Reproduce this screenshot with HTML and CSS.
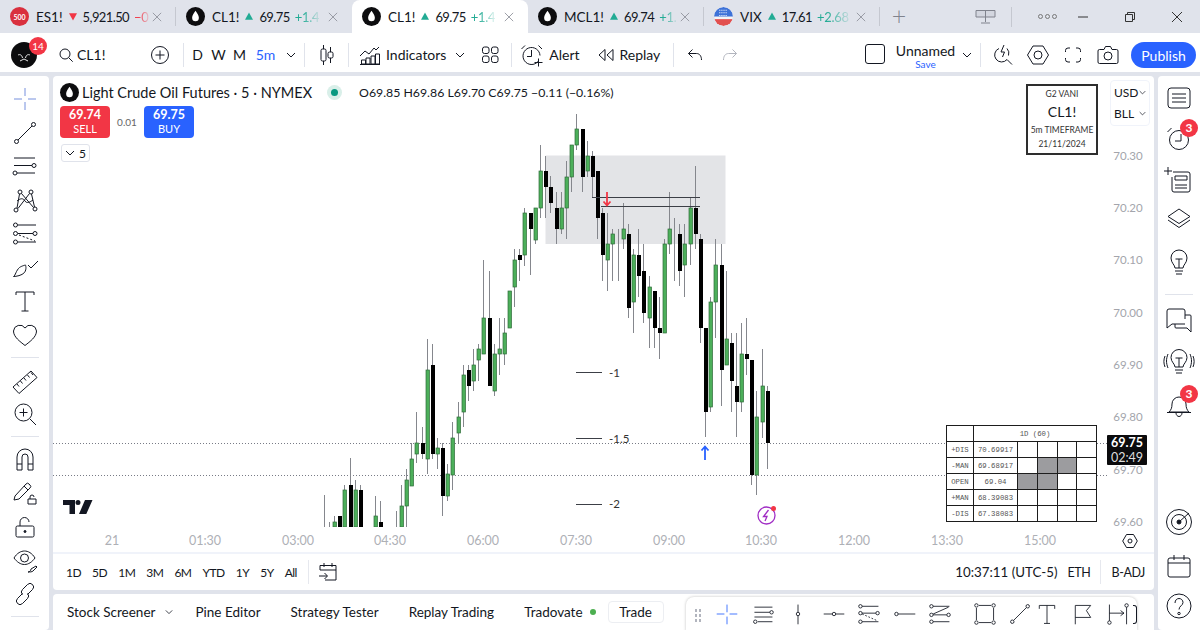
FILE: index.html
```html
<!DOCTYPE html>
<html lang="en">
<head>
    <meta charset="UTF-8">
    <title>CL1! 69.75 - Unnamed</title>
    <link rel="stylesheet" href="styles.css">
</head>
<body>
    <!-- browser style tabs -->
    <div class="tabbar">
        <div class="tab tab-sep">
            <span class="fav fav-red">500</span><span class="sym">ES1!</span>
            <svg class="tri" viewBox="0 0 10 10"><path d="M0 1h10L5 10z" fill="#f23645"/></svg>
            <span class="px">5,921.50</span><span class="chg chg-red">−0</span>
            <svg class="x" viewBox="0 0 12 12"><path d="M1 1l10 10M11 1L1 11"/></svg>
        </div>
        <div class="tab">
            <span class="fav fav-oil"><svg viewBox="0 0 18 18"><path d="M9 3.500C7.500 6 5.800 7.800 5.800 10.200a3.200 3.400 0 0 0 6.400 0C12.200 7.800 10.500 6 9 3.500z" fill="#fff"/></svg></span><span class="sym">CL1!</span>
            <svg class="tri" viewBox="0 0 10 10"><path d="M0 9h10L5 0z" fill="#22ab94"/></svg>
            <span class="px">69.75</span><span class="chg">+1.4</span>
            <svg class="x" viewBox="0 0 12 12"><path d="M1 1l10 10M11 1L1 11"/></svg>
        </div>
        <div class="tab tab-on">
            <span class="fav fav-oil"><svg viewBox="0 0 18 18"><path d="M9 3.500C7.500 6 5.800 7.800 5.800 10.200a3.200 3.400 0 0 0 6.400 0C12.200 7.800 10.500 6 9 3.500z" fill="#fff"/></svg></span><span class="sym">CL1!</span>
            <svg class="tri" viewBox="0 0 10 10"><path d="M0 9h10L5 0z" fill="#22ab94"/></svg>
            <span class="px">69.75</span><span class="chg">+1.4</span>
            <svg class="x" viewBox="0 0 12 12"><path d="M1 1l10 10M11 1L1 11"/></svg>
        </div>
        <div class="tab tab-sep">
            <span class="fav fav-oil"><svg viewBox="0 0 18 18"><path d="M9 3.500C7.500 6 5.800 7.800 5.800 10.200a3.200 3.400 0 0 0 6.400 0C12.200 7.800 10.500 6 9 3.500z" fill="#fff"/></svg></span><span class="sym">MCL1!</span>
            <svg class="tri" viewBox="0 0 10 10"><path d="M0 9h10L5 0z" fill="#22ab94"/></svg>
            <span class="px">69.74</span><span class="chg">+1.</span>
            <svg class="x" viewBox="0 0 12 12"><path d="M1 1l10 10M11 1L1 11"/></svg>
        </div>
        <div class="tab tab-sep">
            <span class="fav fav-flag"><svg viewBox="0 0 18 18"><clipPath id="flag"><circle cx="9" cy="9" r="9"/></clipPath><g clip-path="url(#flag)"><rect width="18" height="18" fill="#f4f4f6"/><rect width="18" height="9" fill="#3d72d8"/><rect y="11.500" width="18" height="6.500" fill="#e2504f"/><path d="M5 3h8M5 5.500h8M5 8h8" stroke="#fff" stroke-dasharray="1 1"/></g></svg></span><span class="sym">VIX</span>
            <svg class="tri" viewBox="0 0 10 10"><path d="M0 9h10L5 0z" fill="#22ab94"/></svg>
            <span class="px">17.61</span><span class="chg">+2.68</span>
            <svg class="x" viewBox="0 0 12 12"><path d="M1 1l10 10M11 1L1 11"/></svg>
        </div>
        <span class="tab-add">+</span>
        <div class="win">
            <svg class="win-layout" viewBox="0 0 24 16"><path d="M3 1.500h19v6.500H3zM12.500 1.500V13M8 14h9" fill="#d3d6df" stroke="#80838d"/></svg>
            <span class="win-sep"></span>
            <span class="win-dots"><i></i><i></i><i></i></span>
            <svg class="win-min" viewBox="0 0 12 2"><path d="M1 1h10" stroke="#333"/></svg>
            <svg class="win-max" viewBox="0 0 12 12"><path d="M1.500 3.500h7v7h-7zM3.500 3.500v-2h7v7h-2" fill="none" stroke="#333"/></svg>
            <svg class="win-close" viewBox="0 0 12 12"><path d="M1 1l10 10M11 1L1 11" stroke="#333"/></svg>
        </div>
    </div>

    <!-- top toolbar -->
    <div class="toolbar">
        <div class="logo">
            <svg class="logo-mark" viewBox="0 0 26 26"><circle cx="13" cy="13" r="13" fill="#0c0c0e"/><path d="M7 13c2-1 4 0 4.500 3M19 13c-2-1-4 0-4.500 3M9 19l4-2 4 2" stroke="#e8e8e8"/></svg>
            <span class="badge badge-logo">14</span>
        </div>
        <div class="search">
            <svg class="ic16" viewBox="0 0 16 16"><circle cx="7" cy="7" r="5" /><path d="M10.700 10.700l4 4"/></svg>
            <span>CL1!</span>
        </div>
        <div class="tb w30"><svg class="ic20" viewBox="0 0 20 20"><circle cx="10" cy="10" r="8.500"/><path d="M10 5.500v9M5.500 10h9"/></svg></div>
        <span class="tb-sep sep-a"></span>
        <div class="intervals">
            <span class="tb w21">D</span><span class="tb w21">W</span><span class="tb w21">M</span><span class="tb w31 blue">5m</span>
            <div class="tb w20"><svg class="chev" viewBox="0 0 10 6"><path d="M1 1l4 4 4-4"/></svg></div>
        </div>
        <span class="tb-sep sep-e"></span>
        <div class="tb w43"><svg class="ic24" viewBox="0 0 24 24"><path d="M8.500 2v4M8.500 18v4M15.500 4v5M15.500 15v5"/><rect x="6" y="6" width="5" height="12" rx="1.500"/><rect x="13" y="9" width="5" height="6" rx="1.500"/></svg></div>
        <span class="tb-sep"></span>
        <div class="tb indicators">
            <svg class="ic24" viewBox="0 0 24 24"><path d="M2 13l5-5 4 3 5-6 2 2 3-3M3.500 21v-4h4v4zM8 21v-6h4v6zM13 21v-8h4v8zM17.500 21v-10h4v10zM2 21.500h20"/></svg>
            <span>Indicators</span>
        </div>
        <div class="tb w28"><svg class="chev" viewBox="0 0 10 6"><path d="M1 1l4 4 4-4"/></svg></div>
        <div class="tb w32"><svg class="ic20" viewBox="0 0 20 20"><rect x="2.500" y="2" width="6.500" height="6.500" rx="2"/><rect x="11.500" y="2" width="6.500" height="6.500" rx="2"/><rect x="2.500" y="11" width="6.500" height="6.500" rx="2"/><rect x="11.500" y="11" width="6.500" height="6.500" rx="2"/></svg></div>
        <span class="tb-sep sep-b"></span>
        <div class="tb alert">
            <svg class="ic24" viewBox="0 0 24 24"><path d="M18 18.500A8.500 8.500 0 1 1 20 12.500M11.500 7v6.500H7M1.500 6l3.500-3.500M22 6l-3.500-3.500M18.500 15.500v8M14.500 19.500h8"/></svg>
            <span>Alert</span>
        </div>
        <div class="tb replay">
            <svg class="ic20" viewBox="0 0 20 20"><path d="M9 4.500l-6 5.500 6 5.500zM17 4.500l-6 5.500 6 5.500z"/></svg>
            <span>Replay</span>
        </div>
        <span class="tb-sep sep-c"></span>
        <div class="tb w35"><svg class="ic20" viewBox="0 0 20 20"><path d="M7.500 4.500l-4 4 4 4M3.500 8.500h8c3 0 5 2.500 5 6.500"/></svg></div>
        <div class="tb w35 off"><svg class="ic20" viewBox="0 0 20 20"><path d="M12.500 4.500l4 4-4 4M16.500 8.500h-8c-3 0-5 2.500-5 6.500"/></svg></div>
        <div class="tb-right">
            <span class="layout-box"></span>
            <div class="layout-name"><span>Unnamed</span><small>Save</small></div>
            <div class="tb w20"><svg class="chev" viewBox="0 0 10 6"><path d="M1 1l4 4 4-4"/></svg></div>
            <span class="tb-sep sep-d"></span>
            <div class="tb w36"><svg class="ic24" viewBox="0 0 24 24"><path d="M9 5.500a7 7 0 1 0 8 11l5 5M14 2l-3 7h3.500l-2 5M17 5.500a7 7 0 0 1 1.500 7"/></svg></div>
            <div class="tb w35"><svg class="ic24" viewBox="0 0 24 24"><path d="M7 3h10l5.500 9-5.500 9H7l-5.500-9z"/><circle cx="12" cy="12" r="4"/></svg></div>
            <div class="tb w35"><svg class="ic20" viewBox="0 0 20 20"><path d="M7 3H5a2.500 2.500 0 0 0-2.500 2.500V7M13 3h2a2.500 2.500 0 0 1 2.500 2.500V7M7 17H5a2.500 2.500 0 0 1-2.500-2.500V13M13 17h2a2.500 2.500 0 0 0 2.500-2.500V13"/></svg></div>
            <div class="tb w36"><svg class="ic24" viewBox="0 0 24 24"><path d="M3.500 6.500h4.500l1.500-3h5l1.500 3h4.500a1.500 1.500 0 0 1 1.500 1.500v11a1.500 1.500 0 0 1-1.500 1.500h-17A1.500 1.500 0 0 1 2 19V8a1.500 1.500 0 0 1 1.500-1.500z"/><circle cx="12" cy="13" r="4"/></svg></div>
            <button class="publish">Publish</button>
        </div>
    </div>

    <div class="main">
        <!-- left drawing tools -->
        <div class="side-left">
            <div class="tool tool-blue"><svg class="ic28" viewBox="0 0 28 28"><path d="M14 3v8M14 17v8M3 14h8M17 14h8"/></svg></div>
            <div class="tool"><svg class="ic28" viewBox="0 0 28 28"><circle cx="5.500" cy="22.500" r="2"/><circle cx="22.500" cy="5.500" r="2"/><path d="M7 21L21 7"/></svg></div>
            <div class="tool"><svg class="ic28" viewBox="0 0 28 28"><path d="M3 6h21M3 13.500h18M6 21h18"/><circle cx="23" cy="13.500" r="2"/><circle cx="4" cy="21" r="2"/></svg></div>
            <div class="tool"><svg class="ic28" viewBox="0 0 28 28"><circle cx="9" cy="6" r="2"/><circle cx="20" cy="6" r="2"/><circle cx="5" cy="24" r="2"/><circle cx="24" cy="23" r="2"/><path d="M8.500 8L6 22M10.500 7.500L22.500 21.500M18.500 7.500L7 22.500M20.500 8L23.500 21M6 15c4-3 6-3 8 0s5 1 8-1"/></svg></div>
            <div class="tool"><svg class="ic28" viewBox="0 0 28 28"><path d="M7 5h18M7 13.500h15M7 22h18"/><circle cx="4.500" cy="5" r="2"/><circle cx="4.500" cy="13.500" r="2"/><circle cx="24" cy="13.500" r="2"/><circle cx="4.500" cy="22" r="2"/><path d="M8 15l16 6" stroke-dasharray="2 2"/></svg></div>
            <div class="tool"><svg class="ic28" viewBox="0 0 28 28"><path d="M2.500 23.500c2-1 2.500-6 6-9 2-1.500 6-2.500 6-2.500s1.500 4-1 7.500c-2.500 3-8.500 4-11 4zM17 12l3 3 7-7"/></svg></div>
            <div class="tool"><svg class="ic28" viewBox="0 0 28 28"><path d="M5 8V5h18v3M14 5v19M10.500 24h7"/></svg></div>
            <div class="tool"><svg class="ic28" viewBox="0 0 28 28"><path d="M14 24.500C9 20.500 2.500 16 2.500 10A6.300 6.300 0 0 1 14 7a6.300 6.300 0 0 1 11.500 3c0 6-6.500 10.500-11.500 14.500z"/></svg></div>
            <span class="side-sep"></span>
            <div class="tool"><svg class="ic28" viewBox="0 0 28 28"><path d="M2 21L20 5l6 6.500L8 27.500zM6 18l2 2.500M9.500 15l2 2.500M13 12l2 2.500M16.500 9l2 2.500M20 6.500l2 2.500" /></svg></div>
            <div class="tool"><svg class="ic28" viewBox="0 0 28 28"><circle cx="12.500" cy="12.500" r="8.500"/><path d="M12.500 8.500v8M8.500 12.500h8M19 19l6 6"/></svg></div>
            <span class="side-sep"></span>
            <div class="tool"><svg class="ic28" viewBox="0 0 28 28"><path d="M6 18V11a8 8 0 0 1 16 0v7M11 18V11a3 3 0 0 1 6 0v7M6 18v6h5v-6zM17 18v6h5v-6z"/></svg></div>
            <div class="tool"><svg class="ic28" viewBox="0 0 28 28"><path d="M3 21l1-4L15 5a2 2 0 0 1 3 0l1 1a2 2 0 0 1 0 3L8 20zM13 7l4 4M17 25v-5h8v5zM19 20v-2a2 2 0 0 1 4 0"/></svg></div>
            <div class="tool"><svg class="ic28" viewBox="0 0 28 28"><path d="M6.500 13h15a1.500 1.500 0 0 1 1.500 1.500v8a1.500 1.500 0 0 1-1.500 1.500h-15A1.500 1.500 0 0 1 5 22.500v-8A1.500 1.500 0 0 1 6.500 13zM9 13V9a4.500 4.500 0 0 1 9 0"/><circle cx="14" cy="18.500" r="1" fill="#131722"/></svg></div>
            <div class="tool"><svg class="ic28" viewBox="0 0 28 28"><path d="M3 11c3-5 7-7 10.500-7S21 6 24 11c-3 4-6.500 6.500-10.500 6.500S6 15 3 11z"/><circle cx="13.500" cy="11" r="4"/><path d="M17 25c1 0 3-1 3-3l5-3 1 1-4 4c-1 1-3 1-5 1z"/></svg></div>
            <div class="tool"><svg class="ic28" viewBox="0 0 28 28"><path d="M11.500 13.500l-5 5a3.500 3.500 0 0 0 5 5l5-5a3.500 3.500 0 0 0 0-5M16.500 14.500l5-5a3.500 3.500 0 0 0-5-5l-5 5a3.500 3.500 0 0 0 0 5"/></svg></div>
            <span class="side-sep"></span>
        </div>

        <div class="center">
            <div class="chart">
                <!-- page coordinates, so bars can be read straight off the screen -->
                <svg id="plot" class="plot" viewBox="53 76 1101 478">
                    <defs><clipPath id="pane"><rect x="53" y="76" width="1056" height="451"/></clipPath></defs>
                    <rect x="545.500" y="155.500" width="180" height="88.500" fill="#e3e4e7"/>
                    <g class="dots">
                        <path d="M53 443.500H1107M53 475.500H1107"/>
                    </g>
                    <g id="bars" clip-path="url(#pane)"></g>
                    <g class="levels">
                        <path d="M592 197.500H700M601 206.500H700"/>
                        <path d="M576 372.500h26M576 438.500h26M576 504.500h26"/>
                    </g>
                    <g class="level-text">
                        <text x="609" y="377">-1</text>
                        <text x="609" y="443">-1.5</text>
                        <text x="609" y="508">-2</text>
                    </g>
                    <path d="M607 192v13M603.500 201.500l3.500 4 3.500-4" class="arrow-down"/>
                    <path d="M705 460v-13M701.500 450.500l3.500-4 3.500 4" class="arrow-up"/>
                    <circle cx="766.500" cy="515.500" r="8.500" class="flash"/>
                    <path d="M768.500 510l-5 6.500h3.500l-2 4.500" class="flash"/>
                    <circle cx="773.500" cy="508.500" r="2.500" fill="#f23645"/>
                    <path d="M63 500h12v14h-5.500v-9H63zM78 505a2.500 2.500 0 1 0 0-5 2.500 2.500 0 0 0 0 5zM85 500h7.500l-6.200 14H79z" fill="#131722"/>
                    <g class="price-labels">
                        <text x="1128" y="160">70.30</text>
                        <text x="1128" y="212">70.20</text>
                        <text x="1128" y="264">70.10</text>
                        <text x="1128" y="317">70.00</text>
                        <text x="1128" y="369">69.90</text>
                        <text x="1128" y="421">69.80</text>
                        <text x="1128" y="474">69.70</text>
                        <text x="1128" y="526">69.60</text>
                    </g>
                    <g class="time-labels">
                        <text x="112" y="545">21</text>
                        <text x="205" y="545">01:30</text>
                        <text x="298" y="545">03:00</text>
                        <text x="390" y="545">04:30</text>
                        <text x="483" y="545">06:00</text>
                        <text x="576" y="545">07:30</text>
                        <text x="669" y="545">09:00</text>
                        <text x="761" y="545">10:30</text>
                        <text x="854" y="545">12:00</text>
                        <text x="947" y="545">13:30</text>
                        <text x="1040" y="545">15:00</text>
                    </g>
                    <g class="axis-cog">
                        <path d="M1126.500 534.500h7l3.800 6.500-3.800 6.500h-7l-3.800-6.500z"/>
                        <circle cx="1130" cy="541" r="2"/>
                    </g>
                </svg>

                <div class="legend">
                    <div class="legend-row">
                        <span class="fav fav-oil"><svg viewBox="0 0 18 18"><path d="M9 3.500C7.500 6 5.800 7.800 5.800 10.200a3.200 3.400 0 0 0 6.400 0C12.200 7.800 10.500 6 9 3.500z" fill="#fff"/></svg></span>
                        <span class="legend-title">Light Crude Oil Futures · 5 · NYMEX</span>
                        <span class="mkt-dot"></span>
                        <span class="ohlc">O69.85 H69.86 L69.70 C69.75 −0.11 (−0.16%)</span>
                    </div>
                    <div class="trade-row">
                        <div class="side-btn sell"><b>69.74</b><span>SELL</span></div>
                        <span class="spread">0.01</span>
                        <div class="side-btn buy"><b>69.75</b><span>BUY</span></div>
                    </div>
                    <div class="collapse"><svg class="chev" viewBox="0 0 10 6"><path d="M1 1l4 4 4-4"/></svg><span>5</span></div>
                </div>

                <div class="note">
                    <span>G2 VANI</span>
                    <strong>CL1!</strong>
                    <span>5m TIMEFRAME</span>
                    <span>21/11/2024</span>
                </div>

                <div class="scale-box">
                    <div><span>USD</span><svg class="chev" viewBox="0 0 10 6"><path d="M1 1l4 4 4-4"/></svg></div>
                    <div><span>BLL</span><svg class="chev" viewBox="0 0 10 6"><path d="M1 1l4 4 4-4"/></svg></div>
                </div>

                <table class="levels-table">
                    <colgroup><col class="col-name"><col class="col-value"><col><col><col><col></colgroup>
                    <tr><td></td><td colspan="5">1D (60)</td></tr>
                    <tr><td>+DIS</td><td>70.69917</td><td></td><td></td><td></td><td></td></tr>
                    <tr><td>-MAN</td><td>69.68917</td><td></td><td class="on"></td><td class="on"></td><td></td></tr>
                    <tr><td>OPEN</td><td>69.04</td><td class="on"></td><td class="on"></td><td></td><td></td></tr>
                    <tr><td>+MAN</td><td>68.39083</td><td></td><td></td><td></td><td></td></tr>
                    <tr><td>-DIS</td><td>67.38083</td><td></td><td></td><td></td><td></td></tr>
                </table>

                <div class="last-price"><b>69.75</b><span>02:49</span></div>

                <div class="range-bar">
                    <span>1D</span><span>5D</span><span>1M</span><span>3M</span><span>6M</span><span>YTD</span><span>1Y</span><span>5Y</span><span>All</span>
                    <i class="range-sep"></i>
                    <svg class="ic20" viewBox="0 0 20 20"><path d="M2 8V3.500h16V18H7M2 8h16M6 1v4M14 1v4M1 14h8M6.500 11l3 3-3 3"/></svg>
                    <div class="range-right">
                        <span class="clock">10:37:11 (UTC-5)</span>
                        <span>ETH</span>
                        <i class="range-sep"></i>
                        <span>B-ADJ</span>
                    </div>
                </div>
            </div>

            <div class="bottom">
                <span class="b-tab b-screener">Stock Screener</span>
                <svg class="chev b-chev" viewBox="0 0 10 6"><path d="M1 1l4 4 4-4"/></svg>
                <span class="b-tab">Pine Editor</span>
                <span class="b-tab">Strategy Tester</span>
                <span class="b-tab">Replay Trading</span>
                <span class="b-tab">Tradovate</span>
                <span class="b-dot"></span>
                <span class="b-trade">Trade</span>

                <!-- floating favourite tools -->
                <div class="fav-tools">
                    <span class="grip"></span>
                    <svg class="fic ic-blue" viewBox="0 0 28 28"><path d="M14 3v9M14 17v9M2 14h9M17 14h9"/></svg>
                    <svg class="fic" viewBox="0 0 28 28"><path d="M4 6h21M4 12h18M8 23h17M4 17.500h21"/><circle cx="24" cy="12" r="2"/><circle cx="5" cy="23" r="2"/></svg>
                    <svg class="fic" viewBox="0 0 28 28"><path d="M14 3v9M14 16v10"/><circle cx="14" cy="14" r="2"/></svg>
                    <svg class="fic" viewBox="0 0 28 28"><path d="M2 14h10M16 14h10"/><circle cx="14" cy="14" r="2"/></svg>
                    <svg class="fic" viewBox="0 0 28 28"><path d="M6 5h19M6 13h16M6 23h19"/><circle cx="4" cy="5" r="2"/><circle cx="4" cy="13" r="2"/><circle cx="24" cy="13" r="2"/><circle cx="4" cy="23" r="2"/><path d="M6 14l18 8" stroke-dasharray="2 2"/></svg>
                    <svg class="fic" viewBox="0 0 28 28"><path d="M6 14h20"/><circle cx="4" cy="14" r="2"/></svg>
                    <svg class="fic" viewBox="0 0 28 28"><path d="M6 5h19M6 15h16M6 23h19M6 14l18-8" /><circle cx="4" cy="5" r="2"/><circle cx="4" cy="15" r="2"/><circle cx="24" cy="15" r="2"/><circle cx="4" cy="23" r="2"/></svg>
                    <svg class="fic fic-rect" viewBox="0 0 28 28"><path d="M7 4h14M7 24h14M4 7v14M24 7v14"/><circle cx="4" cy="4" r="2"/><circle cx="24" cy="4" r="2"/><circle cx="4" cy="24" r="2"/><circle cx="24" cy="24" r="2"/></svg>
                    <svg class="fic fic-line" viewBox="0 0 28 28"><circle cx="5" cy="23" r="2"/><circle cx="23" cy="5" r="2"/><path d="M6.500 21.500l15-15"/></svg>
                    <svg class="fic" viewBox="0 0 28 28"><path d="M5 8V4h18v4M14 4v21M10.500 25h7"/></svg>
                    <svg class="fic" viewBox="0 0 28 28"><path d="M5 26V4h18l-5 6 5 8H5"/></svg>
                    <svg class="fic" viewBox="0 0 28 28"><path d="M4 3v19M4 13h17M17 10l4 3-4 3M24 6v20"/><circle cx="4" cy="24" r="2"/><circle cx="24" cy="4" r="2"/></svg>
                    <span class="clip-bracket"></span>
                </div>
            </div>
        </div>

        <!-- right widget bar -->
        <div class="side-right">
            <div class="wid wid-first"><svg class="ic28" viewBox="0 0 28 28"><rect x="3" y="4" width="22" height="20" rx="3"/><path d="M7 10h14M7 14h14M7 18h14"/></svg></div>
            <div class="wid"><svg class="ic28" viewBox="0 0 28 28"><circle cx="14" cy="16" r="9.500"/><path d="M16 10v7h-6M2.500 8l4-4"/></svg><span class="badge">3</span></div>
            <div class="wid wid-add"><svg class="ic28" viewBox="0 0 28 28"><path d="M8 6h15a2 2 0 0 1 2 2v16a2 2 0 0 1-2 2H9a2 2 0 0 1-2-2V11M3 1v8M-1 5h8M10 10h12v4H10zM10 19h12M10 22h12"/></svg></div>
            <div class="wid wid-layers"><svg class="ic28" viewBox="0 0 28 28"><path d="M14 5l11 7.500-11 7-11-7zM3 16l11 7.500L25 16"/></svg></div>
            <div class="wid wid-bulb"><svg class="ic28" viewBox="0 0 28 28"><path d="M10 20c0-3-4-5-4-10a8 8 0 0 1 16 0c0 5-4 7-4 10zM10 23h8M11 26h6M10.500 11h7M14 11v9"/></svg></div>
            <span class="side-sep sep-r"></span>
            <div class="wid wid-chat"><svg class="ic28" viewBox="0 0 28 28"><path d="M20 13V5a2 2 0 0 0-2-2H4a2 2 0 0 0-2 2v17l5-4h13M20 9h5a1 1 0 0 1 1 1v16l-4-4H11a1 1 0 0 1-1-1v-3"/></svg></div>
            <div class="wid wid-wave"><svg class="ic32" viewBox="0 0 32 28"><path d="M12 19c0-3-4-5-4-9.500a8 8 0 0 1 16 0c0 4.500-4 6.500-4 9.500zM12 22h8M13 25h6M12.500 10h7M16 10v9M5 6c-2 5-2 9 0 14M2 8c-1.500 4-1.500 7 0 11M27 6c2 5 2 9 0 14M30 8c1.500 4 1.500 7 0 11"/></svg></div>
            <div class="wid"><svg class="ic28" viewBox="0 0 28 28"><path d="M4 22c2-2 3-4 3-8a7 7 0 0 1 14 0c0 4 1 6 3 8H4zM2 22.500h24M11 23c0 2 1.500 3.500 3 3.500s3-1.500 3-3.500"/></svg><span class="badge">3</span></div>
            <div class="wid-fill"></div>
            <div class="wid wid-target"><svg class="ic28" viewBox="0 0 28 28"><circle cx="14" cy="14" r="12.500"/><circle cx="14" cy="14" r="7.500"/><circle cx="14" cy="14" r="2" fill="#131722"/><path d="M14 14l10-9"/></svg></div>
            <div class="wid"><svg class="ic28" viewBox="0 0 28 28"><rect x="3" y="6" width="22" height="19" rx="2"/><path d="M3 11h22M9 3v5M19 3v5"/></svg></div>
            <div class="wid"><svg class="ic28" viewBox="0 0 28 28"><circle cx="14" cy="14" r="12"/><path d="M10 11c0-3 2-4.500 4-4.500s4 1.500 4 4c0 3-4 3.500-4 7"/><circle cx="14" cy="21.500" r="1.200"/></svg></div>
        </div>
    </div>

    <script src="chart.js"></script>
</body>
</html>
```

FILE: styles.css
```css
body {
    margin: 0;
    width: 1200px;
    height: 630px;
    overflow: hidden;
    background: #e0e3eb;
    color: #131722;
    font-family: Lato, "Noto Sans", sans-serif;
    font-size: 14px;
    display: flex;
    flex-direction: column;
}

svg {
    fill: none;
    stroke: #131722;
    stroke-width: 1;
    flex: none;
}
.ic16 { width: 16px; height: 16px; }
.ic20 { width: 20px; height: 20px; }
.ic24 { width: 24px; height: 24px; }
.ic28 { width: 28px; height: 28px; overflow: visible; }
.ic32 { width: 32px; height: 28px; }
.chev { width: 10px; height: 6px; }

/* tabs */
.tabbar {
    height: 33px;
    display: flex;
    align-items: stretch;
    flex: none;
}
.tab {
    width: 176px;
    box-sizing: border-box;
    padding-left: 10px;
    display: flex;
    align-items: center;
    font-size: 13.500px;
    position: relative;
}
.tab-sep::after {
    content: "";
    position: absolute;
    right: 0;
    top: 7px;
    bottom: 7px;
    width: 1px;
    background: #c5c8d0;
}
.tab-on {
    background: #fff;
    border-radius: 8px 8px 0 0;
}
.fav {
    width: 19px;
    height: 19px;
    border-radius: 50%;
    flex: none;
    display: flex;
    align-items: center;
    justify-content: center;
    overflow: hidden;
}
.fav svg { width: 100%; height: 100%; stroke: none; }
.fav-red { background: #d9303e; color: #fff; font-size: 7px; font-weight: 700; }
.fav-oil { background: #0d0d0f; }
.sym { margin-left: 7px; }
.tri { width: 8px; height: 9px; margin-left: 6px; stroke: none; }
.px { margin-left: 6px; font-size: 13px; letter-spacing: -.6px; }
.chg {
    margin-left: 5px;
    color: #22ab94;
    font-size: 13px;
    letter-spacing: -.3px;
    -webkit-mask-image: linear-gradient(90deg, #000 30%, rgba(0, 0, 0, .15) 100%);
    mask-image: linear-gradient(90deg, #000 30%, rgba(0, 0, 0, .15) 100%);
}
.chg-red { color: #f23645; }
.x {
    position: absolute;
    right: 14px;
    width: 10px;
    height: 10px;
    stroke: #8a8d96;
}
.tab-add {
    width: 38px;
    text-align: center;
    font-size: 25px;
    font-weight: 300;
    line-height: 31px;
    color: #80838d;
}
.win {
    margin-left: auto;
    display: flex;
    align-items: center;
    padding-right: 17px;
}
.win-layout { width: 24px; height: 16px; margin-right: 14px; stroke: none; }
.win-sep { width: 1px; height: 20px; background: #c5c8d0; margin-right: 26px; }
.win-dots { display: flex; gap: 2px; margin-right: 20px; }
.win-dots i { width: 5px; height: 5px; border: 1px solid #777; border-radius: 50%; box-sizing: border-box; }
.win-min { width: 12px; height: 2px; margin-right: 35px; stroke: none; }
.win-max { width: 12px; height: 12px; margin-right: 35px; stroke: none; }
.win-close { width: 12px; height: 12px; stroke: none; }

/* top toolbar */
.toolbar {
    height: 39px;
    flex: none;
    background: #fff;
    display: flex;
    align-items: flex-end;
    font-size: 14px;
}
.toolbar > *, .intervals > *, .tb-right > * { height: 35px; }
.tb {
    display: flex;
    align-items: center;
    justify-content: center;
    flex: none;
}
.w20 { width: 20px; }
.w21 { width: 21px; }
.w28 { width: 28px; }
.w30 { width: 30px; }
.w31 { width: 31px; }
.w32 { width: 32px; }
.w35 { width: 35px; }
.w36 { width: 36px; }
.w43 { width: 43px; }
.blue { color: #2962ff; }
.off svg { stroke: #b2b5be; }
.tb-sep {
    width: 1px;
    height: 24px !important;
    margin-bottom: 5px;
    background: #e0e3eb;
    flex: none;
}
.sep-a { margin-left: 8px; margin-right: 3px; }
.sep-b { margin-left: 5px; margin-right: 7px; }
.sep-c { margin-left: 13px; margin-right: 3px; }
.sep-d { margin-left: 3px; margin-right: 3px; }
.sep-e { margin-left: 3px; }
.logo {
    width: 58px;
    position: relative;
    flex: none;
}
.logo-mark {
    position: absolute;
    left: 11px;
    top: 5px;
    width: 26px;
    height: 26px;
    stroke: none;
}
.badge {
    position: absolute;
    top: -5px;
    right: -3px;
    width: 18px;
    height: 18px;
    border-radius: 50%;
    background: #f23645;
    color: #fff;
    font-size: 12px;
    font-weight: 700;
    text-align: center;
    line-height: 18px;
}
.badge-logo { top: 0; right: 11px; font-size: 10px; font-weight: 400; }
.search {
    width: 87px;
    flex: none;
    display: flex;
    align-items: center;
    gap: 3px;
}
.intervals { display: flex; }
.indicators { padding-left: 9px; gap: 4px; }
.alert { width: 61px; gap: 5px; }
.replay { margin-left: 16px; gap: 3px; }
.tb-right {
    margin-left: auto;
    display: flex;
    align-items: flex-end;
    padding-right: 4px;
}
.layout-box {
    width: 18px;
    height: 18px !important;
    border: 1px solid #131722;
    border-radius: 3px;
    margin-bottom: 8px;
    margin-right: 13px;
}
.layout-name {
    display: flex;
    flex-direction: column;
    align-items: center;
    width: 55px;
    line-height: 14px;
    margin-right: 4px;
    padding-top: 7px;
    box-sizing: border-box;
}
.layout-name small { font-size: 10px; color: #2962ff; line-height: 12px; }
.publish {
    width: 65px;
    height: 26px !important;
    margin-bottom: 4px;
    margin-left: 5px;
    border: none;
    border-radius: 13px;
    background: #2962ff;
    color: #fff;
    font: inherit;
    padding: 0;
}

/* main area */
.main {
    flex: 1;
    display: flex;
    gap: 4px;
    margin-top: 4px;
    min-height: 0;
}
.side-left {
    width: 49px;
    flex: none;
    background: #fff;
    border-radius: 0 4px 4px 0;
    display: flex;
    flex-direction: column;
    align-items: center;
    padding-top: 6px;
    box-sizing: border-box;
}
.tool {
    height: 33.700px;
    flex: none;
    display: flex;
    align-items: center;
}
.tool-blue svg { stroke: #7690dd; }
.side-sep {
    width: 28px;
    height: 1px;
    background: #e0e3eb;
    flex: none;
    margin: 5px 0 6px;
}
.center {
    flex: 1;
    display: flex;
    flex-direction: column;
    gap: 4px;
    min-width: 0;
}
.chart {
    flex: 1;
    background: #fff;
    border-radius: 4px;
    position: relative;
    display: flex;
    flex-direction: column;
    justify-content: flex-end;
    overflow: hidden;
}
.plot {
    position: absolute;
    left: 0;
    top: 0;
    width: 1101px;
    height: 478px;
    stroke: none;
}
.plot text { stroke: none; font-family: Lato, "Noto Sans", sans-serif; }
.dots path { stroke: #787b86; stroke-dasharray: 1 2; }
.levels path { stroke: #3c3f46; }
.level-text text { fill: #333; font-size: 11.500px; }
.arrow-down { stroke: #f23645; stroke-width: 1.800; }
.arrow-up { stroke: #2962ff; stroke-width: 1.800; }
.flash { stroke: #a02cc4; stroke-width: 1.300; }
.price-labels text { fill: #a3a5ac; font-size: 11.500px; text-anchor: middle; }
.time-labels text { fill: #aeb0b6; font-size: 12.500px; text-anchor: middle; }
.axis-cog { stroke: #131722; }

/* legend */
.legend {
    position: absolute;
    left: 7px;
    top: 6px;
}
.legend-row {
    display: flex;
    align-items: center;
    height: 20px;
}
.legend-title { margin-left: 3px; font-size: 14.500px; }
.mkt-dot {
    width: 7px;
    height: 7px;
    margin-left: 19px;
    border-radius: 50%;
    background: #089981;
    box-shadow: 0 0 0 4px #d9efe9;
}
.ohlc { margin-left: 21px; font-size: 12.300px; }
.trade-row {
    display: flex;
    align-items: center;
    margin-top: 4px;
}
.side-btn {
    width: 50px;
    height: 32px;
    border-radius: 4px;
    color: #fff;
    display: flex;
    flex-direction: column;
    align-items: center;
    justify-content: center;
    line-height: 14px;
    font-size: 11px;
}
.side-btn b { font-size: 12.500px; }
.sell { background: #f23645; }
.buy { background: #2962ff; }
.spread {
    width: 34px;
    text-align: center;
    font-size: 10px;
    color: #666;
}
.collapse {
    width: 29px;
    height: 18px;
    box-sizing: border-box;
    margin-top: 6px;
    margin-left: 1px;
    border: 1px solid #e0e3eb;
    border-radius: 3px;
    display: flex;
    align-items: center;
    justify-content: center;
    gap: 4px;
    font-size: 12px;
}

.note {
    position: absolute;
    left: 973px;
    top: 8px;
    width: 72px;
    height: 71px;
    box-sizing: border-box;
    border: 2px solid #2e2e2e;
    background: #fff;
    display: flex;
    flex-direction: column;
    align-items: center;
    justify-content: space-around;
    font-size: 8.500px;
    color: #333;
    padding: 1px 0 2px;
}
.note strong { font-size: 14px; font-weight: 400; color: #131722; }

.scale-box {
    position: absolute;
    left: 1057px;
    top: 4px;
    width: 40px;
    height: 46px;
    box-sizing: border-box;
    border: 1px solid #f0f3fa;
    border-radius: 4px;
    display: flex;
    flex-direction: column;
    justify-content: space-around;
    font-size: 12px;
    padding: 1px 3px 1px 3px;
}
.scale-box div { display: flex; align-items: center; justify-content: space-between; }
.scale-box .chev { width: 7px; height: 5px; }

.levels-table {
    position: absolute;
    left: 893px;
    top: 349px;
    width: 151px;
    height: 94px;
    border-collapse: collapse;
    table-layout: fixed;
    background: #fff;
    font-family: "Liberation Mono", monospace;
    font-size: 7.300px;
    color: #555;
    text-align: center;
}
.levels-table td {
    border: 1px solid #1d1d1d;
    padding: 0;
    height: 15px;
}
.col-name { width: 27px; }
.col-value { width: 44px; }
.levels-table .on { background: #9c9c9f; }

.last-price {
    position: absolute;
    left: 1054px;
    top: 359px;
    width: 40px;
    height: 30px;
    background: #0b0b0d;
    border-radius: 1px;
    color: #fff;
    display: flex;
    flex-direction: column;
    align-items: center;
    justify-content: center;
    line-height: 15px;
    font-size: 12.500px;
}
.last-price b { font-weight: 700; }
.last-price span { color: #ddd; }

.range-bar {
    height: 36px;
    flex: none;
    border-top: 2px solid #f0f3fa;
    display: flex;
    align-items: center;
    padding-left: 13px;
    gap: 11px;
    font-size: 12px;
    letter-spacing: -.5px;
    position: relative;
}
.range-bar .ic20 { margin-left: -2px; }
.range-sep {
    width: 1px;
    height: 24px;
    background: #e6e8ee;
}
.range-right {
    margin-left: auto;
    margin-right: 9px;
    display: flex;
    align-items: center;
    gap: 10px;
    font-size: 12.500px;
    letter-spacing: -.4px;
}
.clock { font-size: 13.300px; letter-spacing: 0; }

/* bottom panel */
.bottom {
    height: 36px;
    flex: none;
    background: #fff;
    border-radius: 4px 4px 0 0;
    display: flex;
    align-items: center;
    padding-left: 14px;
    font-size: 13.500px;
    position: relative;
}
.b-tab { margin-right: 30px; }
.b-screener { margin-right: 10px; }
.b-chev { margin-right: 22px; width: 8px; }
.b-dot {
    width: 6px;
    height: 6px;
    border-radius: 50%;
    background: #4caf50;
    margin-left: -23px;
    margin-right: 12px;
}
.b-trade {
    width: 56px;
    height: 22px;
    border: 1px solid #eceef2;
    border-radius: 4px;
    box-sizing: border-box;
    text-align: center;
    line-height: 20px;
}
.fav-tools {
    position: absolute;
    left: 633px;
    top: 3px;
    width: 451px;
    height: 40px;
    background: #fff;
    border-radius: 8px;
    box-shadow: 0 0 3px rgba(0, 0, 0, .25);
    display: flex;
    align-items: flex-start;
    padding-top: 5px;
    box-sizing: border-box;
    padding-left: 8px;
    overflow: hidden;
}
.grip {
    width: 8px;
    height: 14px;
    margin: 6px 13px 0 0;
    flex: none;
    background-image: radial-gradient(#b2b5be 1px, transparent 1px);
    background-size: 4px 5px;
}
.fic { width: 24px; height: 24px; margin-right: 11.500px; }
.fic-rect { margin-left: 9px; }
.fic-line { margin-right: 3px; }
.ic-blue { stroke: #2962ff; }
.clip-bracket {
    width: 4px;
    height: 17px;
    margin: 3px 0 0 -9px;
    border: 1px solid #131722;
    border-left: none;
    border-radius: 0 3px 3px 0;
}

/* right bar */
.side-right {
    width: 42px;
    flex: none;
    background: #fff;
    border-radius: 4px 0 0 4px;
    display: flex;
    flex-direction: column;
    align-items: center;
    padding-bottom: 4px;
    box-sizing: border-box;
}
.wid {
    height: 40px;
    flex: none;
    display: flex;
    align-items: center;
    justify-content: center;
    position: relative;
}
.wid .badge { top: 1px; right: -5px; }
.wid-first { margin-top: 2px; }
.wid-add { margin-top: 2px; }
.wid-layers { margin-top: -2px; }
.wid-bulb { margin-top: 4px; }
.sep-r { margin: 12px 0 0; }
.wid-chat { margin-top: 5px; }
.wid-fill { flex: 1; }
.wid-wave { height: 44px; }
.wid-target { margin-bottom: 4px; }
```

FILE: chart.js
```js
// each bar: x, high, body top, body bottom, low, kind (g green, b black, w wick only)
var bars = [
    [324, 495, 527, 527, 527, "w"], [329, 522, 527, 527, 527, "w"],
    [334, 516, 522, 527, 527, "g"], [339, 516, 516, 527, 527, "b"],
    [344.3, 485, 490, 527, 527, "g"], [349.7, 458, 485, 527, 527, "b"],
    [354.7, 480, 490, 527, 527, "g"], [359.7, 485, 490, 527, 527, "b"],
    [375, 496, 516, 527, 527, "g"], [380, 501, 522, 527, 527, "b"],
    [395.7, 511, 527, 527, 527, "w"], [400.7, 485, 506, 527, 527, "g"],
    [406, 469, 480, 506, 527, "g"], [411.3, 443, 459, 486, 486, "g"],
    [416.3, 412, 443, 454, 463, "g"], [421.7, 427, 443, 454, 459, "b"],
    [427, 339, 370, 459, 474, "g"], [432, 344, 365, 454, 459, "b"],
    [437, 438, 448, 454, 469, "g"], [442, 443, 448, 496, 516, "b"],
    [447.3, 464, 474, 496, 501, "g"], [452.3, 422, 438, 475, 490, "g"],
    [457.7, 402, 417, 433, 443, "g"], [462.7, 365, 375, 412, 427, "g"],
    [468, 365, 370, 386, 401, "b"], [473, 349, 365, 381, 391, "g"],
    [478.3, 344, 349, 360, 381, "g"], [483.3, 260, 318, 354, 354, "g"],
    [488.7, 271, 318, 386, 386, "b"], [493.7, 344, 354, 391, 396, "g"],
    [499, 318, 349, 354, 375, "g"], [504, 318, 333, 354, 365, "g"],
    [509, 291, 291, 328, 328, "g"], [514.3, 249, 260, 287, 307, "g"],
    [519.3, 249, 255, 260, 281, "b"], [524.3, 208, 213, 255, 266, "g"],
    [529.7, 213, 213, 229, 275, "b"], [535, 208, 208, 240, 244, "g"],
    [540, 145, 171, 208, 218, "g"], [545.3, 156, 171, 187, 218, "b"],
    [550.3, 176, 187, 203, 213, "b"], [555.7, 192, 208, 229, 244, "b"],
    [560.7, 192, 208, 229, 234, "g"], [566, 161, 177, 208, 239, "g"],
    [571, 145, 145, 177, 192, "g"], [576.3, 114, 129, 145, 150, "g"],
    [581.7, 129, 129, 177, 192, "b"], [586.7, 141, 156, 171, 177, "g"],
    [591.7, 151, 156, 177, 197, "b"], [597, 171, 171, 218, 239, "b"],
    [602, 208, 213, 255, 281, "b"], [607, 213, 244, 260, 291, "g"],
    [612.3, 229, 234, 244, 281, "g"], [617.7, 229, 234, 235, 281, "w"],
    [622.7, 203, 229, 239, 249, "g"], [628, 224, 234, 308, 318, "b"],
    [633, 249, 255, 302, 333, "g"], [638.3, 229, 255, 276, 297, "b"],
    [643.3, 244, 271, 313, 323, "b"], [648.5, 276, 287, 318, 348, "g"],
    [653.5, 291, 291, 328, 348, "b"], [659, 297, 328, 333, 359, "b"],
    [664, 239, 244, 333, 333, "g"], [669, 192, 229, 244, 254, "g"],
    [674, 218, 229, 230, 281, "w"], [679.3, 224, 234, 271, 286, "b"],
    [684.3, 224, 244, 265, 297, "g"], [689.7, 197, 208, 244, 265, "g"],
    [694.7, 166, 208, 234, 249, "b"], [700, 234, 239, 328, 343, "b"],
    [705, 328, 328, 412, 437, "b"], [710, 297, 302, 407, 412, "g"],
    [715.3, 239, 265, 302, 338, "g"], [720.7, 244, 265, 370, 406, "b"],
    [725.7, 271, 339, 365, 365, "g"], [730.7, 333, 343, 381, 412, "b"],
    [736, 333, 386, 402, 437, "b"], [741, 323, 354, 402, 412, "g"],
    [746.3, 318, 354, 359, 375, "b"], [751.3, 360, 360, 475, 485, "b"],
    [756.3, 391, 417, 475, 495, "g"], [762, 349, 386, 422, 438, "g"],
    [767, 386, 391, 443, 469, "b"]
];

var group = document.getElementById("bars");
var ns = "http://www.w3.org/2000/svg";

function add(tag, attrs) {
    var el = document.createElementNS(ns, tag);
    for (var key in attrs) {
        el.setAttribute(key, attrs[key]);
    }
    group.appendChild(el);
}

bars.forEach(function (b) {
    var x = Math.round(b[0]) + 0.5;
    add("path", { d: "M" + x + " " + b[1] + "V" + b[4], stroke: "#85878d", "stroke-width": 1 });
    if (b[5] === "w") return;
    if (b[5] === "g") {
        add("rect", { x: x - 1.5, y: b[2], width: 3.5, height: b[3] - b[2], fill: "#4caf5a", stroke: "#2f6b3a", "stroke-width": 0.7 });
    } else {
        add("rect", { x: x - 1.5, y: b[2], width: 4, height: b[3] - b[2], fill: "#000" });
    }
});
```
